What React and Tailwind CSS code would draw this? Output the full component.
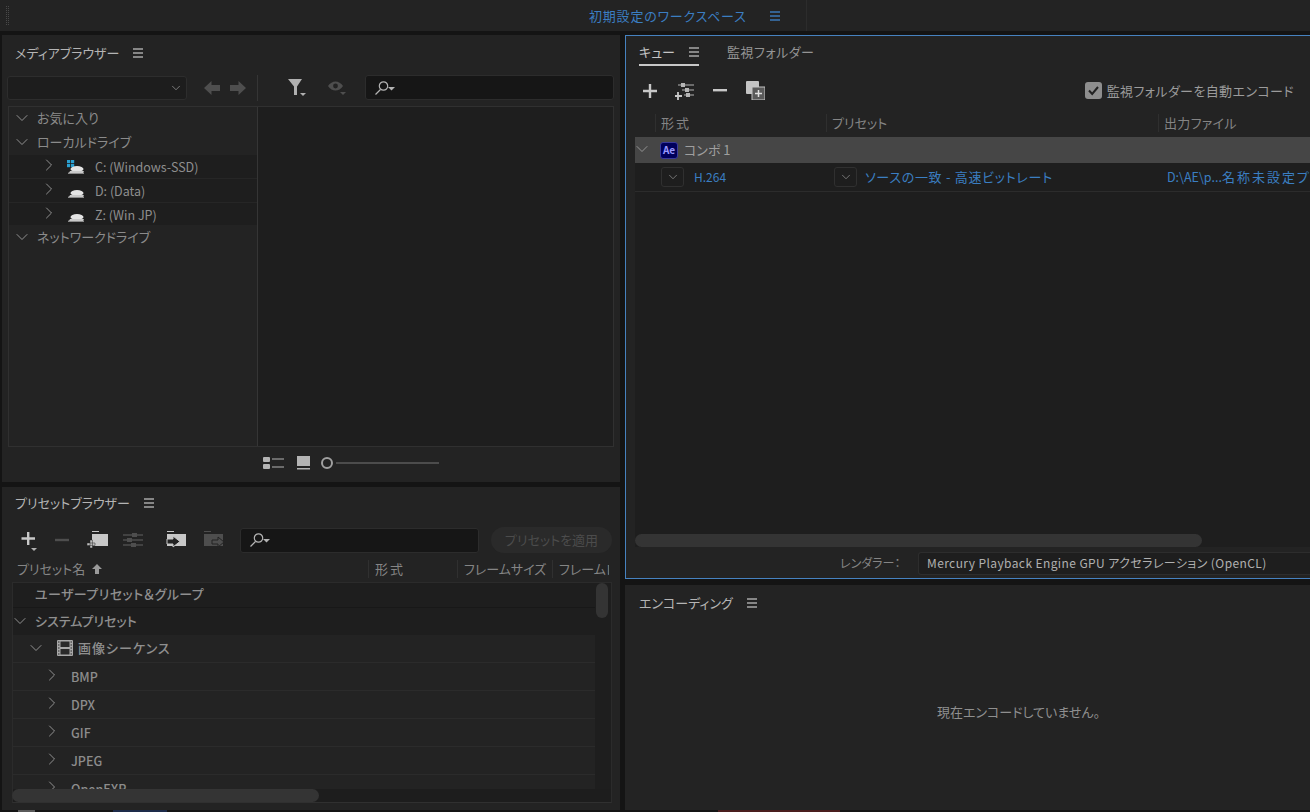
import { ChevronDown, ChevronRight } from 'lucide-react'

function Menu({ className = 'text-[#a8a8a8]' }) {
  return (
    <svg width="10" height="10" viewBox="0 0 10 10" className={className}>
      <path d="M0 1h10M0 5h10M0 9h10" stroke="currentColor" strokeWidth="1.4" />
    </svg>
  )
}

// chevrons in the reference are wider than their 14px slot
function Caret({ open, className = '' }) {
  const Icon = open ? ChevronDown : ChevronRight
  return <Icon size={20} strokeWidth={1.1} className={`text-[#9a9a9a] flex-shrink-0 -mx-[3px] ${className}`} />
}

function SearchBox({ className }) {
  return (
    <div className={`h-[25px] flex items-center pl-[8px] bg-[#161616] border border-[#2c2c2c] rounded-[3px] ${className}`}>
      <svg width="22" height="16" viewBox="0 0 22 16">
        <circle cx="9.5" cy="6" r="4.2" fill="none" stroke="#b4b4b4" strokeWidth="1.2" />
        <path d="M6.5 9.5L1.5 14.5" stroke="#b4b4b4" strokeWidth="1.2" />
        <path d="M14 7h7l-3.5 3.5z" fill="#b4b4b4" />
      </svg>
    </div>
  )
}

function Drive({ windows }) {
  return (
    <svg width="18" height="16" viewBox="0 0 18 16" className="flex-shrink-0">
      {windows && (
        <g fill="#2a9fd0">
          <rect x="0" y="0" width="3.2" height="3.2" />
          <rect x="4" y="0" width="3.2" height="3.2" />
          <rect x="0" y="4" width="3.2" height="3.2" />
          <rect x="4" y="4" width="3.2" height="3.2" />
        </g>
      )}
      <ellipse cx="10" cy="9" rx="6.500" ry="3" fill="#e4e4e4" />
      <path d="M1 12.500h16v1.500H1z" fill="#8a8a8a" />
      <path d="M3 11h14l-1 2H2z" fill="#c9c9c9" />
    </svg>
  )
}

function DriveRow({ label, windows, border }) {
  return (
    <div className={`h-[24px] flex items-center pl-[33px] bg-[#1e1e1e] ${border ? 'border-b border-[#262626]' : ''}`}>
      <Caret className="-mt-[4px]" />
      <div className="ml-[11px] mt-[2px]"><Drive windows={windows} /></div>
      <span className="ml-[10px] text-[12.5px] text-[#8e8e8e] mt-[1px]">{label}</span>
    </div>
  )
}

function TreeHead({ label, className = 'h-[24px]' }) {
  return (
    <div className={`flex items-center pl-[6px] ${className}`}>
      <Caret open />
      <span className="ml-[8px] text-[13px] text-[#8b8b8b]">{label}</span>
    </div>
  )
}

function MediaBrowser() {
  return (
    <section className="h-[447px] bg-[#232323] flex flex-col">
      <div className="h-[37px] flex items-center pl-[13px] gap-[14px] pb-[2px]">
        <span className="text-[13px] text-[#b4b4b4]">メディアブラウザー</span>
        <Menu />
      </div>
      <div className="h-[31px] flex items-center pl-[5px]">
        <div className="w-[180px] h-[24px] flex items-center justify-end pr-[3px] bg-[#1d1d1d] border border-[#2d2d2d] rounded-[3px]">
          <ChevronDown size={14} strokeWidth={1.2} className="text-[#a0a0a0]" />
        </div>
        <svg width="42" height="14" viewBox="0 0 42 14" className="ml-[17px]">
          <path d="M0 7l7.500-7v4h8.500v6H7.500v4z" fill="#4e4e4e" />
          <path d="M42 7l-7.500-7v4H26v6h8.500v4z" fill="#4e4e4e" />
        </svg>
        <div className="w-px h-[26px] bg-[#353535] ml-[11px]" />
        <svg width="20" height="20" viewBox="0 0 20 20" className="ml-[29px]">
          <path d="M1 1h14L10 8.5V17H7V8.5z" fill="#b0b0b0" />
          <path d="M13 15h6l-3 3z" fill="#b0b0b0" />
        </svg>
        <svg width="20" height="18" viewBox="0 0 20 18" className="ml-[20px]">
          <path d="M1 7c4-6 11-6 15 0-4 6-11 6-15 0z" fill="#4e4e4e" />
          <circle cx="8.5" cy="7" r="2.4" fill="#232323" />
          <path d="M13 13h6l-3 3z" fill="#4e4e4e" />
        </svg>
        <SearchBox className="w-[249px] ml-[18px]" />
      </div>
      <div className="ml-[6px] mr-[6px] mt-[3px] h-[341px] flex border border-[#303030]">
        <div className="w-[249px] border-r border-[#353535]">
          <TreeHead label="お気に入り" className="h-[22px]" />
          <TreeHead label="ローカルドライブ" className="h-[26px]" />
          <DriveRow label="C: (Windows-SSD)" windows border />
          <DriveRow label="D: (Data)" border />
          <div className="h-[22px] overflow-hidden"><DriveRow label="Z: (Win JP)" /></div>
          <TreeHead label="ネットワークドライブ" />
        </div>
        <div className="flex-1 bg-[#1e1e1e]" />
      </div>
      <div className="flex-1 flex items-center pl-[261px] pb-[3px]">
        <svg width="21" height="14" viewBox="0 0 21 14">
          <rect x="0" y="1" width="7" height="5" rx="1" fill="#b4b4b4" />
          <rect x="0" y="8" width="7" height="5" rx="1" fill="#b4b4b4" />
          <path d="M9 3h12M9 11h12" stroke="#b4b4b4" strokeWidth="1.2" />
        </svg>
        <svg width="13" height="14" viewBox="0 0 13 14" className="ml-[13px]">
          <rect x="0" y="0" width="13" height="10" fill="#b4b4b4" />
          <rect x="0" y="12" width="13" height="1.5" fill="#b4b4b4" />
        </svg>
        <div className="ml-[11px] w-[12px] h-[12px] rounded-full border-2 border-[#a0a0a0]" />
        <div className="ml-[3px] w-[103px] h-[2px] bg-[#4c4c4c]" />
      </div>
    </section>
  )
}

function PresetHeadCell({ label, className, textClass = '' }) {
  return (
    <div className={`h-[18px] flex items-center border-l border-[#303030] overflow-hidden whitespace-nowrap ${className}`}>
      <span className={`pl-[6px] text-[13px] text-[#858585] ${textClass}`}>{label}</span>
    </div>
  )
}

function PresetRow({ label }) {
  return (
    <div className="h-[28px] flex-shrink-0 flex items-center pl-[32px] pt-[1px] border-b border-[#2b2b2b]">
      <Caret className="-mt-[4px]" />
      <span className="ml-[12px] text-[12.5px] font-medium text-[#8c8c8c]">{label}</span>
    </div>
  )
}

function PresetBrowser() {
  return (
    <section className="h-[323px] bg-[#232323] flex flex-col">
      <div className="h-[32px] flex items-center pl-[13px] gap-[14px]">
        <span className="text-[13px] text-[#b4b4b4]">プリセットブラウザー</span>
        <Menu />
      </div>
      <div className="h-[40px] flex items-center pl-[18px] pt-[2px]">
        <svg width="18" height="24" viewBox="0 0 18 24" className="mt-[2px]">
          <path d="M7 3h2.4v13H7zM1.500 8.300h13.500v2.400H1.500z" fill="#c8c8c8" />
          <path d="M11 19h6l-3 3z" fill="#b0b0b0" />
        </svg>
        <svg width="14" height="4" viewBox="0 0 14 4" className="ml-[17px]"><rect y="0.800" width="14" height="2.400" fill="#4e4e4e" /></svg>
        <svg width="22" height="18" viewBox="0 0 22 18" className="ml-[18px]">
          <path d="M5 0h7v1H5zM5 3h16v12H5z" fill="#c8c8c8" />
          <path d="M3 9h2.400v8H3zM0 12h8v2.400H0z" fill="#c8c8c8" stroke="#232323" strokeWidth="0.500" />
        </svg>
        <svg width="20" height="14" viewBox="0 0 20 14" className="ml-[14px]">
          <path d="M0 2h20M0 7h20M0 12h20" stroke="#4e4e4e" strokeWidth="1.400" />
          <rect x="9" y="0" width="5" height="4" fill="#4e4e4e" /><rect x="4" y="5" width="5" height="4" fill="#4e4e4e" /><rect x="8" y="10" width="5" height="4" fill="#4e4e4e" />
        </svg>
        <svg width="21" height="18" viewBox="0 0 21 18" className="ml-[23px]">
          <path d="M1 0h7v1H1zM1 3h19v12H1z" fill="#c8c8c8" />
          <path d="M1 8h6V5l7 5.500-7 5.500v-3H1z" fill="#232323" stroke="#c8c8c8" strokeWidth="1" />
        </svg>
        <svg width="21" height="18" viewBox="0 0 21 18" className="ml-[16px]">
          <path d="M1 0h7v1H1zM1 3h19v12H1z" fill="#4e4e4e" />
          <path d="M9 9h6V6l6 5-6 5v-3H9z" fill="#4e4e4e" stroke="#232323" strokeWidth="1" />
        </svg>
        <SearchBox className="w-[239px] ml-[16px]" />
        <div className="ml-[12px] w-[121px] h-[26px] rounded-full bg-[#2a2a2a] flex items-center justify-center text-[13px] text-[#4c4c4c]">
          プリセットを適用
        </div>
      </div>
      <div className="h-[23px] flex items-center pl-[15px] pr-[11px] pb-[4px]">
        <div className="w-[351px] flex items-center gap-[7px]">
          <span className="text-[13px] text-[#858585]">プリセット名</span>
          <svg width="10" height="10" viewBox="0 0 10 10"><path d="M5 0l5 5H7v5H3V5H0z" fill="#9a9a9a" /></svg>
        </div>
        <PresetHeadCell label="形式" className="w-[89px]" textClass="tracking-[2px]" />
        <PresetHeadCell label="フレームサイズ" className="w-[95px]" />
        <PresetHeadCell label="フレームレート" className="flex-1" />
      </div>
      <div className="ml-[10px] mr-[8px] h-[221px] flex flex-col border border-[#2b2b2b] border-b-[#303030] bg-[#1e1e1e] relative">
        <div className="flex-1 overflow-hidden flex flex-col mr-[16px] bg-[#232323]">
          <div className="h-[25px] flex-shrink-0 flex items-center pl-[22px] pb-[3px] bg-[#1e1e1e] border-b border-[#181818]">
            <span className="text-[13px] font-medium text-[#8f8f8f] tracking-[0.4px]">ユーザープリセット＆グループ</span>
          </div>
          <div className="h-[27px] flex-shrink-0 flex items-center pb-[1px] bg-[#1e1e1e]">
            <Caret open />
            <span className="ml-[8px] text-[13px] font-medium text-[#8f8f8f]">システムプリセット</span>
          </div>
          <div className="h-[28px] flex-shrink-0 flex items-center pl-[16px] pb-[2px] border-b border-[#2b2b2b]">
            <Caret open />
            <svg width="16" height="16" viewBox="0 0 16 16" className="ml-[14px]">
              <rect width="16" height="16" rx="1" fill="#a8a8a8" />
              <rect x="3.500" y="1.500" width="9" height="5.500" fill="#2a2a2a" />
              <rect x="3.500" y="9" width="9" height="5.500" fill="#2a2a2a" />
              <path d="M1 2h1.500M1 5h1.500M1 8h1.500M1 11h1.500M1 14h1.500M13.500 2H15M13.500 5H15M13.500 8H15M13.500 11H15M13.500 14H15" stroke="#2a2a2a" strokeWidth="1" />
            </svg>
            <span className="ml-[5px] text-[13px] font-medium text-[#8f8f8f] tracking-[1px]">画像シーケンス</span>
          </div>
          <PresetRow label="BMP" />
          <PresetRow label="DPX" />
          <PresetRow label="GIF" />
          <PresetRow label="JPEG" />
          <PresetRow label="OpenEXR" />
        </div>
        <div className="h-[13px] flex-shrink-0 bg-[#1d1d1d]">
          <div className="-ml-px w-[307px] h-[13px] rounded-full bg-[#343434]" />
        </div>
        <div className="absolute top-0 right-[3px] w-[12px] h-[35px] rounded-full bg-[#343434]" />
      </div>
    </section>
  )
}

function QueueHeadCell({ label, className, textClass = '' }) {
  return (
    <div className={`h-[18px] flex items-center border-l border-[#2f2f2f] pl-[5px] ${className}`}>
      <span className={`text-[13px] text-[#858585] whitespace-nowrap ${textClass}`}>{label}</span>
    </div>
  )
}

function SmallSelect() {
  return (
    <div className="w-[23px] h-[20px] flex items-center justify-center bg-[#1e1e1e] border border-[#303030] rounded-[3px] flex-shrink-0">
      <ChevronDown size={14} strokeWidth={1.2} className="text-[#9a9a9a]" />
    </div>
  )
}

function Queue() {
  return (
    <section className="h-[544px] bg-[#232323] border border-[#4682c0] border-r-0 flex flex-col">
      <div className="h-[30px] flex items-end pl-[13px]">
        <div className="h-[24px] w-[60px] flex items-start gap-[14px] pt-[2px] border-b-2 border-[#c8c8c8]">
          <span className="text-[13px] text-[#c4c4c4] leading-[16px]">キュー</span>
          <div className="mt-[3px]"><Menu /></div>
        </div>
        <span className="ml-[28px] mb-[2px] pt-[2px] h-[22px] text-[13px] text-[#949494] leading-[16px] tracking-[0.5px]">監視フォルダー</span>
      </div>
      <div className="h-[49px] flex items-center pl-[17px] pr-[16px]">
        <svg width="14" height="14" viewBox="0 0 14 14"><path d="M5.800 0h2.400v14H5.800zM0 5.800h14v2.400H0z" fill="#c8c8c8" /></svg>
        <svg width="20" height="18" viewBox="0 0 20 18" className="ml-[18px]">
          <path d="M3 3h16M7 8h12M9 13h10" stroke="#b4b4b4" strokeWidth="1.200" />
          <rect x="6" y="1" width="4" height="4" fill="#b4b4b4" /><rect x="10" y="6" width="4" height="4" fill="#b4b4b4" /><rect x="11" y="11" width="4" height="4" fill="#b4b4b4" />
          <path d="M3 10v8M0 14h7" stroke="#c8c8c8" strokeWidth="1.800" />
        </svg>
        <svg width="14" height="3" viewBox="0 0 14 3" className="ml-[18px]"><rect width="14" height="2.400" fill="#c8c8c8" /></svg>
        <svg width="19" height="19" viewBox="0 0 19 19" className="ml-[19px]">
          <rect x="0" y="0" width="13" height="13" rx="1" fill="#c4c4c4" />
          <rect x="6" y="6" width="13" height="13" fill="#5a5a5a" stroke="#c4c4c4" strokeWidth="1" />
          <path d="M12.500 9v7M9 12.500h7" stroke="#e0e0e0" strokeWidth="1.500" />
        </svg>
        <div className="ml-auto flex items-center gap-[5px]">
          <div className="w-[17px] h-[17px] rounded-[3px] bg-[#8e8e8e] flex items-center justify-center">
            <svg width="13" height="13" viewBox="0 0 13 13"><path d="M2 6.500l3.200 3.500L11 3" fill="none" stroke="#222222" strokeWidth="2" /></svg>
          </div>
          <span className="text-[13px] text-[#9b9b9b] tracking-[0.4px]">監視フォルダーを自動エンコード</span>
        </div>
      </div>
      <div className="h-[22px] flex items-center pl-[29px] pb-[6px]">
        <QueueHeadCell label="形式" className="w-[171px]" textClass="tracking-[2px]" />
        <QueueHeadCell label="プリセット" className="w-[332px]" />
        <QueueHeadCell label="出力ファイル" className="flex-1" textClass="tracking-[0.3px]" />
      </div>
      <div className="ml-[9px] h-[410px] flex flex-col bg-[#1e1e1e]">
        <div className="h-[26px] flex items-center bg-[#464646]">
          <Caret open className="-mt-[2px]" />
          <div className="ml-[11px] w-[18px] h-[17px] rounded-[3px] bg-[#00005b] border border-[#3a3a9a] flex items-center justify-center text-[10px] font-bold text-[#9999ff] leading-none">
            Ae
          </div>
          <span className="ml-[6px] text-[13px] text-[#9f9f9f]">コンポ 1</span>
        </div>
        <div className="h-[28px] flex items-center border-b border-[#2c2c2c] mt-[1px] pl-[26px] pb-[1px] overflow-hidden">
          <SmallSelect />
          <span className="ml-[10px] w-[140px] flex-shrink-0 text-[12px] text-[#3b7ec2]">H.264</span>
          <SmallSelect />
          <span className="ml-[8px] w-[302px] flex-shrink-0 text-[13px] text-[#3b7ec2] whitespace-nowrap tracking-[0.7px]">ソースの一致 - 高速ビットレート</span>
          <span className="flex-shrink-0 text-[13px] text-[#3b7ec2] whitespace-nowrap">
            <span className="text-[12.5px]">D:\AE\p...</span>
            <span className="tracking-[2px]">名称未設定プ</span>
          </span>
        </div>
        <div className="flex-1" />
        <div className="h-[13px] flex-shrink-0">
          <div className="w-[567px] h-[13px] rounded-full bg-[#343434]" />
        </div>
      </div>
      <div className="flex-1 flex items-center pl-[214px] pt-[1px] whitespace-nowrap overflow-hidden">
        <span className="w-[78px] text-[12px] text-[#858585]">レンダラー：</span>
        <div className="h-[23px] flex-1 flex items-center pl-[8px] bg-[#1e1e1e] border border-[#2d2d2d] border-r-0 rounded-l-[3px]">
          <span className="text-[12px] text-[#b0b0b0] tracking-[0.4px]">Mercury Playback Engine GPU アクセラレーション (OpenCL)</span>
        </div>
      </div>
    </section>
  )
}

function Encoding() {
  return (
    <section className="h-[225px] bg-[#232323] flex flex-col">
      <div className="h-[36px] flex items-center pl-[14px] gap-[14px]">
        <span className="text-[13px] text-[#b4b4b4]">エンコーディング</span>
        <Menu />
      </div>
      <div className="flex-1 flex items-center pl-[312px] pb-[7px]">
        <span className="text-[13px] text-[#8f8f8f]">現在エンコードしていません。</span>
      </div>
    </section>
  )
}

export default function App() {
  return (
    <div className="w-[1310px] h-[812px] overflow-hidden flex flex-col bg-[#141414] font-['Noto_Sans_CJK_JP','Noto_Sans',sans-serif] [font-feature-settings:'palt']">
      <header className="h-[31px] flex-shrink-0 bg-[#232323] flex items-center pl-[6px]">
        <div className="w-[3px] h-[19px] border-x border-dotted border-[#484848]" />
        <div className="ml-[580px] w-[158px] text-[13px] text-[#3b7ec2] whitespace-nowrap tracking-[0.8px]">初期設定のワークスペース</div>
        <div className="ml-[23px]"><Menu className="text-[#3b78b8]" /></div>
        <div className="ml-[26px] w-px h-[31px] bg-[#2c2c2c]" />
      </header>
      <div className="h-[4px] flex-shrink-0" />
      <main className="h-[775px] flex-shrink-0 flex pl-[2px]">
        <div className="w-[618px] flex flex-col gap-[5px]">
          <MediaBrowser />
          <PresetBrowser />
        </div>
        <div className="ml-[5px] flex-1 min-w-0 flex flex-col gap-[6px]">
          <Queue />
          <Encoding />
        </div>
      </main>
      <div className="flex-1 flex">
        <div className="ml-[18px] w-[17px] bg-[#5a5a5a]" />
        <div className="ml-[78px] w-[54px] bg-[#1d2b4a]" />
        <div className="ml-[551px] w-[122px] bg-[#4a1e1e]" />
      </div>
    </div>
  )
}
